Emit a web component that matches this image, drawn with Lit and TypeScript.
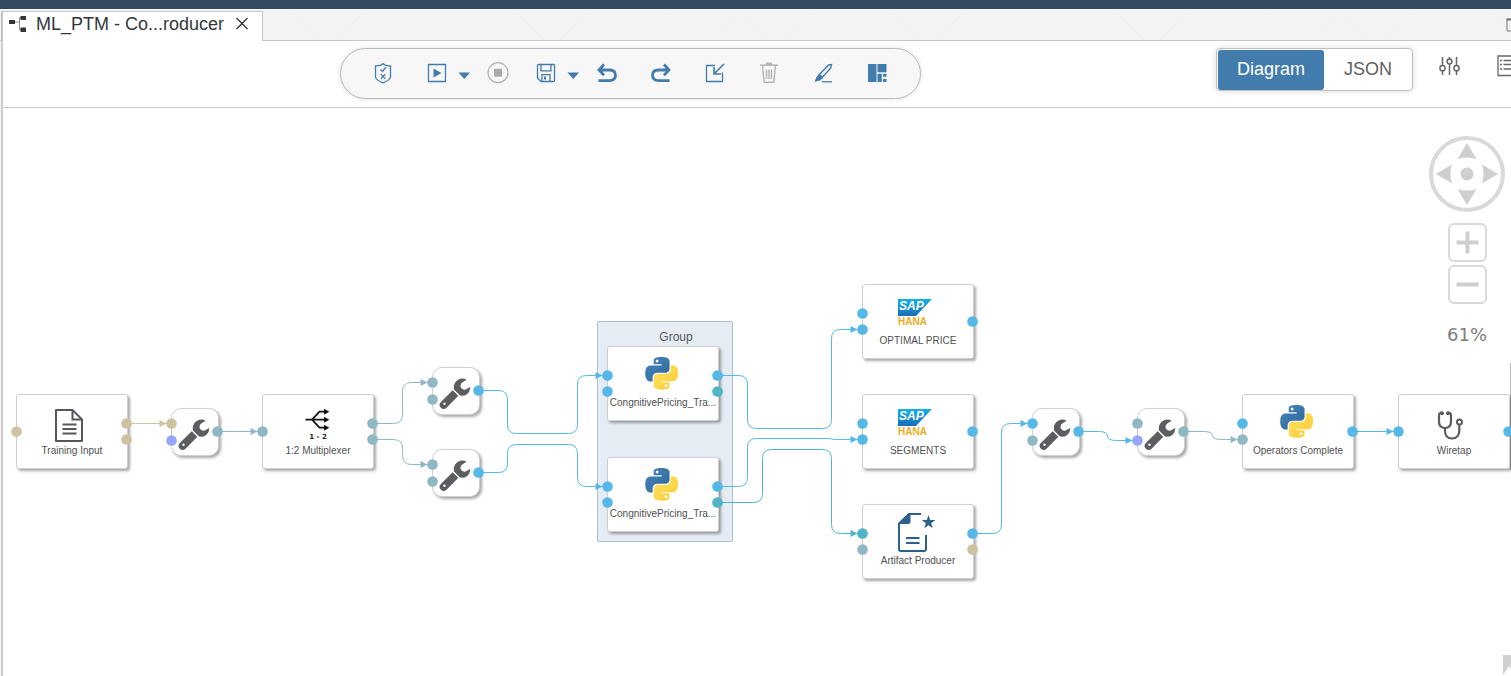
import { LitElement, html, svg, css } from "lit";
import { customElement, property, state } from "lit/decorators.js";
import { classMap } from "lit/directives/class-map.js";
import { styleMap } from "lit/directives/style-map.js";

type Point = [number, number];
type Port = [number, number, string];

interface GraphNode {
  x: number;
  y: number;
  icon: string;
  label?: string;
  ports: Port[];
}

interface Edge {
  color: string;
  points: Point[];
}

const TAN = "#cdc3a1";
const TEAL = "#8fb7c4";
const BLUE = "#56b8e6";
const CYAN = "#4fb4c6";
const VIOLET = "#94a5fb";

/* Port offsets shared by cards (112px wide) and tools (48px wide). */
const card = {
  inTop: (c: string): Port => [0, 29, c],
  inMid: (c: string): Port => [0, 37, c],
  inLow: (c: string): Port => [0, 45, c],
  outTop: (c: string): Port => [110, 29, c],
  outMid: (c: string): Port => [110, 37, c],
  outLow: (c: string): Port => [110, 45, c],
};
const tool = {
  inTop: (c: string): Port => [0, 15, c],
  inLow: (c: string): Port => [0, 32, c],
  out: (c: string): Port => [46, 23, c],
};

const NODES: GraphNode[] = [
  { x: 16, y: 286, icon: "document", label: "Training Input", ports: [card.inMid(TAN), card.outTop(TAN), card.outLow(TAN)] },
  { x: 171, y: 300, icon: "wrench", ports: [tool.inTop(TAN), tool.inLow(VIOLET), tool.out(TEAL)] },
  { x: 262, y: 286, icon: "multiplexer", label: "1:2 Multiplexer", ports: [card.inMid(TEAL), card.outTop(TEAL), card.outLow(TEAL)] },
  { x: 432, y: 259, icon: "wrench", ports: [tool.inTop(TEAL), tool.inLow(TEAL), tool.out(BLUE)] },
  { x: 432, y: 341, icon: "wrench", ports: [tool.inTop(TEAL), tool.inLow(TEAL), tool.out(BLUE)] },
  { x: 607, y: 238, icon: "python", label: "CongnitivePricing_Tra...", ports: [card.inTop(BLUE), card.inLow(BLUE), card.outTop(BLUE), card.outLow(CYAN)] },
  { x: 607, y: 349, icon: "python", label: "CongnitivePricing_Tra...", ports: [card.inTop(BLUE), card.inLow(BLUE), card.outTop(BLUE), card.outLow(CYAN)] },
  { x: 862, y: 176, icon: "hana", label: "OPTIMAL PRICE", ports: [card.inTop(BLUE), card.inLow(BLUE), card.outMid(BLUE)] },
  { x: 862, y: 286, icon: "hana", label: "SEGMENTS", ports: [card.inTop(BLUE), card.inLow(BLUE), card.outMid(BLUE)] },
  { x: 862, y: 396, icon: "artifact", label: "Artifact Producer", ports: [card.inTop(CYAN), card.inLow(TEAL), card.outTop(BLUE), card.outLow(TAN)] },
  { x: 1032, y: 300, icon: "wrench", ports: [tool.inTop(BLUE), tool.inLow(TEAL), tool.out(BLUE)] },
  { x: 1137, y: 300, icon: "wrench", ports: [tool.inTop(TEAL), tool.inLow(VIOLET), tool.out(TEAL)] },
  { x: 1242, y: 286, icon: "python", label: "Operators Complete", ports: [card.inTop(BLUE), card.inLow(TEAL), card.outMid(BLUE)] },
  { x: 1398, y: 286, icon: "stethoscope", label: "Wiretap", ports: [card.inMid(BLUE), card.outMid(BLUE)] },
];

const EDGES: Edge[] = [
  { color: TAN, points: [[126, 315], [171, 315]] },
  { color: TEAL, points: [[217, 323], [262, 323]] },
  { color: TEAL, points: [[372, 315], [402, 315], [402, 274], [432, 274]] },
  { color: TEAL, points: [[372, 331], [402, 331], [402, 356], [432, 356]] },
  { color: BLUE, points: [[478, 282], [507, 282], [507, 325], [577, 325], [577, 267], [607, 267]] },
  { color: BLUE, points: [[478, 364], [507, 364], [507, 336], [577, 336], [577, 378], [607, 378]] },
  { color: BLUE, points: [[717, 267], [747, 267], [747, 320], [831, 320], [831, 221], [862, 221]] },
  { color: BLUE, points: [[717, 378], [747, 378], [747, 330], [831, 330], [831, 331], [862, 331]] },
  { color: CYAN, points: [[717, 394], [762, 394], [762, 341], [831, 341], [831, 425], [862, 425]] },
  { color: BLUE, points: [[972, 425], [1001, 425], [1001, 315], [1032, 315]] },
  { color: BLUE, points: [[1078, 323], [1107, 323], [1107, 332], [1137, 332]] },
  { color: TEAL, points: [[1183, 323], [1212, 323], [1212, 331], [1242, 331]] },
  { color: BLUE, points: [[1352, 323], [1398, 323]] },
];

/* Orthogonal route through the points with rounded corners. */
function route(points: Point[], radius = 9): string {
  let d = `M${points[0][0]} ${points[0][1]}`;
  for (let i = 1; i < points.length - 1; i++) {
    const [px, py] = points[i - 1];
    const [cx, cy] = points[i];
    const [nx, ny] = points[i + 1];
    const before = Math.abs(cx - px) + Math.abs(cy - py);
    const after = Math.abs(nx - cx) + Math.abs(ny - cy);
    const inR = Math.min(radius, before / 2);
    const outR = Math.min(radius, after / 2);
    const ax = cx - Math.sign(cx - px) * inR;
    const ay = cy - Math.sign(cy - py) * inR;
    const bx = cx + Math.sign(nx - cx) * outR;
    const by = cy + Math.sign(ny - cy) * outR;
    d += `L${ax} ${ay}Q${cx} ${cy} ${bx} ${by}`;
  }
  const end = points[points.length - 1];
  return `${d}L${end[0]} ${end[1]}`;
}

const PYTHON_BLUE =
  "M14.25.18l.9.2.73.26.59.3.45.32.34.34.25.34.16.33.1.3.04.26.02.2-.01.13V8.5l-.05.63-.13.55-.21.46-.26.38-.3.31-.33.25-.35.19-.35.14-.33.1-.3.07-.26.04-.21.02H8.77l-.69.05-.59.14-.5.22-.41.27-.33.32-.27.35-.2.36-.15.37-.1.35-.07.32-.04.27-.02.21v3.06H3.17l-.21-.03-.28-.07-.32-.12-.35-.18-.36-.26-.36-.36-.35-.46-.32-.59-.28-.73-.21-.88-.14-1.05-.05-1.23.06-1.22.16-1.04.24-.87.32-.71.36-.57.4-.44.42-.33.42-.24.4-.16.36-.1.32-.05.24-.01h.16l.06.01h8.16v-.83H6.18l-.01-2.75-.02-.37.05-.34.11-.31.17-.28.25-.26.31-.23.38-.2.44-.18.51-.15.58-.12.64-.1.71-.06.77-.04.84-.02 1.27.05zm-6.3 1.98l-.23.33-.08.41.08.41.23.34.33.22.41.09.41-.09.33-.22.23-.34.08-.41-.08-.41-.23-.33-.33-.22-.41-.09-.41.09z";
const PYTHON_YELLOW =
  "M21.04 6.11l.28.06.32.12.35.18.36.27.36.35.35.47.32.59.28.73.21.88.14 1.04.05 1.23-.06 1.23-.16 1.04-.24.86-.32.71-.36.57-.4.45-.42.33-.42.24-.4.16-.36.09-.32.05-.24.02-.16-.01h-8.22v.82h5.84l.01 2.76.02.36-.05.34-.11.31-.17.29-.25.25-.31.24-.38.2-.44.17-.51.15-.58.13-.64.09-.71.07-.77.04-.84.01-1.27-.04-1.07-.14-.9-.2-.73-.25-.59-.3-.45-.33-.34-.34-.25-.34-.16-.33-.1-.3-.04-.25-.02-.2.01-.13v-5.34l.05-.64.13-.54.21-.46.26-.38.3-.32.33-.24.35-.2.35-.14.33-.1.3-.06.26-.04.21-.02.13-.01h5.84l.69-.05.59-.14.5-.21.41-.28.33-.32.27-.35.2-.36.15-.36.1-.35.07-.32.04-.28.02-.21V6.07h2.09l.14.01zm-6.47 14.25l-.23.33-.08.41.08.41.23.33.33.23.41.08.41-.08.33-.23.23-.33.08-.41-.08-.41-.23-.33-.33-.23-.41-.08-.41.08z";

const NODE_ICONS: Record<string, unknown> = {
  document: svg`
    <g fill="none" stroke="#55585a" stroke-width="2">
      <path d="M4 8h16.500l9.500 9.500V39H4z" stroke-linejoin="round"/>
      <path d="M20.500 8v9.500H30M10.500 22.500h14M10.500 27h14M10.500 31.500h14"/>
    </g>`,
  multiplexer: svg`
    <g fill="none" stroke="#111" stroke-width="1.800">
      <path d="M7.500 17.700h20M14 17.700L21.500 9.700H27.500M14 17.700l7.500 8H27.500"/>
    </g>
    <path d="M26 6.700l5.300 3-5.300 3zM26 14.700l5.300 3-5.300 3zM26 22.700l5.300 3-5.300 3z" fill="#111"/>
    <text class="mux" x="20" y="37" text-anchor="middle">1 - 2</text>`,
  python: svg`
    <g transform="translate(2.300 3) scale(1.360)" fill-rule="evenodd">
      <path d=${PYTHON_BLUE} fill="url(#pyBlue)"/>
      <path d=${PYTHON_YELLOW} fill="url(#pyYellow)"/>
    </g>
    <defs>
      <linearGradient id="pyBlue" x1="0" y1="0" x2="1" y2="1"><stop offset="0" stop-color="#4587bd"/><stop offset="1" stop-color="#2f6595"/></linearGradient>
      <linearGradient id="pyYellow" x1="0" y1="0" x2="1" y2="1"><stop offset="0" stop-color="#ffe467"/><stop offset="1" stop-color="#fbca32"/></linearGradient>
    </defs>`,
  hana: svg`
    <defs><linearGradient id="sapBlue" x1="0" y1="0" x2="0" y2="1"><stop offset="0" stop-color="#12b2ea"/><stop offset="1" stop-color="#1c6cb8"/></linearGradient></defs>
    <path d="M0 7h34L18 24H0z" fill="url(#sapBlue)"/>
    <text class="sap" x="1" y="18">SAP</text>
    <text class="hana" x="0" y="33">HANA</text>`,
  artifact: svg`
    <g fill="none" stroke="#2e608c" stroke-width="2">
      <path d="M23 2H11L1 11.500V37q0 2 2 2h23q2 0 2-2V23" stroke-linejoin="round"/>
      <path d="M8 26h13.500M8 31h13.500"/>
    </g>
    <path d="M0 12L11 1.500h1.500V10q0 2-2 2z" fill="#2e608c"/>
    <path d="M30.500 3l1.700 4.900 5.100.1-4.100 3.200 1.500 5-4.200-3-4.200 3 1.500-5L23.700 8l5.100-.1z" fill="#2e608c"/>`,
  stethoscope: svg`
    <g fill="none" stroke="#5a5c5e" stroke-width="2.200" stroke-linecap="round">
      <path d="M8 11Q5 10.500 5 13.500v6q0 6.500 6 6.500t6-6.500v-6q0-3-3-2.500"/>
      <path d="M11 26v2.500q0 8 7 8t7.300-8V23"/>
      <circle cx="25.500" cy="20" r="2.500" stroke-width="2"/>
    </g>
    <circle cx="8" cy="11.300" r="2" fill="#5a5c5e"/><circle cx="14" cy="11.300" r="2" fill="#5a5c5e"/>`,
  wrench: svg`
    <path d="M11.700 37.800L23.500 26" stroke="#5b5d60" stroke-width="8" stroke-linecap="round"/>
    <circle cx="12.500" cy="36.700" r="1.200" fill="#fff"/>
    <path d="M34.600 12.700A8.600 8.600 0 0 0 21.800 20q0 2.500.8 4.200l4 3.900q4.700 1.700 8.300-.9 3.400-2.700 3.300-7.200l-4.600 2.600q-4.100.4-5.200-3.100.1-3.100 2.200-4.200z" fill="#5b5d60"/>
    <path d="M20.500 22L28.500 30" stroke="#fff" stroke-width="1.400"/>`,
};

const TOOL_ICONS: Record<string, unknown> = {
  validate: svg`<g fill="none" stroke="currentColor" stroke-width="1.300">
      <path d="M11 1.700Q8 4.300 3.500 3.800V15q.5 3 7.500 5.800 7-2.800 7.500-5.800V3.800Q14 4.300 11 1.700z"/>
      <path d="M8.500 7.500l2 2L14 5.200M8.700 12.300l4.600 4.600M13.300 12.300l-4.600 4.600"/></g>`,
  run: svg`<path d="M2.500 2.500h17v17h-17z" fill="none" stroke="currentColor" stroke-width="1.300"/><path d="M7.500 6.500l8 4.500-8 4.500z" fill="currentColor"/>`,
  stop: svg`<circle cx="11" cy="10.700" r="10" fill="none" stroke="currentColor" stroke-width="1.300"/><path d="M7 6.700h8v8H7z" fill="#aaa"/>`,
  save: svg`<g fill="none" stroke="currentColor" stroke-width="1.300">
      <path d="M3.500 2.500h15q1 0 1 1v15q0 1-1 1H6l-3.500-3.500V3.500q0-1 1-1z"/>
      <path d="M6 2.500v6.300h10V2.500M7 19.500v-6.800h8v6.800"/></g><path d="M9 14.500h2v3H9z" fill="currentColor"/>`,
  undo: svg`<path d="M8 2.500L3 8l5 5.300M3.500 8H13.500q6 .3 6 5.300t-6 5.400H2.500" fill="none" stroke="currentColor" stroke-width="2.800"/>`,
  redo: svg`<path d="M14 2.500L19 8l-5 5.300M18.500 8H8.500q-6 .3-6 5.300t6 5.400H19.500" fill="none" stroke="currentColor" stroke-width="2.800"/>`,
  import: svg`<g fill="none" stroke="currentColor"><path d="M11 3.500H2.500v16h16V10.500" stroke-width="1.300"/><path d="M20 2L10.500 11.500M10 5v7h7" stroke-width="1.600"/></g>`,
  trash: svg`<g fill="none" stroke="currentColor" stroke-width="1.400"><path d="M4.500 4l1.700 16.300h9.600L17.500 4M8.500 7.500v9.500M11 7.500v9.500M13.500 7.500v9.500"/><path d="M2 3.200h18" stroke-width="1.600"/></g><path d="M8 .5h6v2.500H8z" fill="currentColor"/>`,
  clean: svg`<path d="M7.500 12.500L16.500 3l3-.5-.8 3.500-8.500 9.500z" fill="none" stroke="currentColor" stroke-width="1.400"/><path d="M7 12l4 4-3 2.500-5.500 1.300L4.500 15z" fill="currentColor"/><path d="M10 19.800h10" stroke="currentColor" stroke-width="1.300"/>`,
  arrange: svg`<path d="M2 2h8.500v18H2zM11.500 2h9v8.300h-9zM11.500 11.700h4.300V20h-4.300zM17 11.700h3.500v3H17zM17 17h3.500v3H17z" fill="currentColor"/>`,
};

@customElement("graph-node")
export class GraphNodeElement extends LitElement {
  @property() icon = "";
  @property() label = "";

  static styles = css`
    :host { display: block; }
    .card, .tool {
      box-sizing: border-box;
      background: #fff;
      border: 1px solid #cfcfcf;
      box-shadow: 2px 2px 3px rgba(0, 0, 0, 0.35);
    }
    .card {
      width: 112px;
      height: 75px;
      border-radius: 3px;
      display: flex;
      flex-direction: column;
      align-items: center;
      padding-top: 7px;
    }
    .tool { width: 48px; height: 48px; border-radius: 10px; }
    .tool svg { margin: -1px; }
    svg { display: block; flex: none; overflow: visible; }
    .label {
      font: 10px/18px "Liberation Sans", Arial, sans-serif;
      color: #505050;
      white-space: nowrap;
    }
    .mux { font: bold 7px "DejaVu Sans", sans-serif; fill: #222; }
    .sap { font: italic bold 12px "Liberation Sans", sans-serif; fill: #fff; }
    .hana { font: bold 10px "Liberation Sans", sans-serif; fill: #f0ab1c; }
  `;

  render() {
    if (!this.label) {
      return html`<div class="tool"><svg width="48" height="48" viewBox="0 0 48 48">${NODE_ICONS[this.icon]}</svg></div>`;
    }
    return html`<div class="card">
      <svg width="40" height="40" viewBox="0 0 40 40">${NODE_ICONS[this.icon]}</svg>
      <span class="label">${this.label}</span>
    </div>`;
  }
}

@customElement("app-root")
export class AppRoot extends LitElement {
  @state() private view: "diagram" | "json" = "diagram";

  static styles = css`
    :host {
      display: flex;
      flex-direction: column;
      min-height: 100vh;
      overflow: hidden;
      background: #fff;
      color: #333;
      font-family: "Liberation Sans", Arial, sans-serif;
    }
    svg { display: block; flex: none; }
    button {
      margin: 0;
      padding: 0;
      border: 0;
      background: none;
      color: inherit;
      font: inherit;
      cursor: pointer;
    }
    .shell { height: 9px; background: #354a5f; }
    .tabs {
      position: relative;
      display: flex;
      align-items: flex-end;
      justify-content: space-between;
      height: 31px;
      background: #f3f3f3;
      border-bottom: 1px solid #c4c4c4;
    }
    .pattern { position: absolute; inset: 0; width: 100%; height: 100%; }
    .tab {
      position: relative;
      box-sizing: border-box;
      display: flex;
      align-items: center;
      height: 30px;
      margin: 0 0 -1px 1px;
      padding: 0 14px 6px 6px;
      gap: 9px;
      background: #fff;
      border: solid #c4c4c4;
      border-width: 1px 1px 0 2px;
    }
    .tab-title { font-size: 18px; line-height: 24px; color: #32363a; white-space: nowrap; }
    .close { margin-left: 3px; }
    .maximize { position: relative; align-self: center; width: 5px; overflow: hidden; }
    .body {
      flex: 1;
      display: flex;
      flex-direction: column;
      background: linear-gradient(90deg, #f4f4f4 0 1px, #cbcbcb 1px 3px, #fff 3px);
    }
    .bar {
      box-sizing: border-box;
      display: flex;
      align-items: flex-start;
      height: 67px;
      margin-left: 3px;
      padding-top: 7px;
      border-bottom: 1px solid #c9c9c9;
    }
    .space-left { flex: 337; }
    .space-mid { flex: 295; }
    .pill {
      box-sizing: border-box;
      flex: none;
      display: flex;
      align-items: center;
      gap: 32px;
      height: 51px;
      padding: 0 32px 1px 31px;
      border: 1px solid #b9b9b9;
      border-radius: 26px;
      background: #f7f7f7;
      box-shadow: 0 0 5px rgba(0, 0, 0, 0.12);
      color: #427cac;
    }
    .split { display: flex; gap: 9px; margin-right: -16px; }
    .muted { color: #b5b5b5; }
    .stop { margin-right: -6px; }
    .actions { flex: none; display: flex; width: 295px; color: #666; }
    .actions > * { flex: none; }
    .switch {
      box-sizing: border-box;
      display: flex;
      width: 197px;
      height: 43px;
      padding: 1px 0 0 1px;
      border: 1px solid #bfbfbf;
      border-radius: 4px;
      background: #fff;
      box-shadow: 0 0 6px rgba(0, 0, 0, 0.14);
      font-size: 18px;
      line-height: 38px;
    }
    .switch button { flex: 88; height: 40px; padding-bottom: 2px; border-radius: 3px; color: #5f5f5f; }
    .switch .selected { flex: 106; background: #427cac; color: #fff; }
    .settings { margin: 7px 37px 0 26px; align-self: flex-start; }
    .outline { margin-top: 7px; align-self: flex-start; }
    .canvas { position: relative; flex: 1; min-height: 568px; overflow: hidden; }
    .layer { position: absolute; inset: 0; width: 100%; height: 100%; pointer-events: none; }
    .group {
      position: absolute;
      left: 597px;
      top: 213px;
      box-sizing: border-box;
      width: 136px;
      height: 221px;
      padding: 7px 0 0 22px;
      border: 1px solid #a8bfd8;
      border-radius: 2px;
      background: #e6ecf4;
      text-align: center;
      font-size: 12px;
      line-height: 16px;
      color: #5a5a5a;
    }
    .node { position: absolute; }
    .nav {
      position: absolute;
      top: 28px;
      right: 6px;
      display: flex;
      flex-direction: column;
      align-items: center;
      color: #d9d9d9;
    }
    .zoom {
      box-sizing: border-box;
      width: 39px;
      height: 39px;
      margin-top: 3px;
      border: 2px solid #d9d9d9;
      border-radius: 6px;
      background: #fff;
    }
    .pad { margin-bottom: 8px; }
    .level {
      margin-top: 20px;
      font: 18px/22px "DejaVu Sans", Verdana, sans-serif;
      color: #7c7c7c;
    }
    .edge-handle { position: absolute; right: 0; top: 255px; width: 1px; height: 107px; background: #bdbdbd; }
    .corner { position: absolute; right: 0; bottom: 0; }
  `;

  private tool(name: string, label: string, cls = "") {
    return html`<button class=${cls} aria-label=${label} title=${label}>
      <svg width="22" height="22" viewBox="0 0 22 22">${TOOL_ICONS[name]}</svg>
    </button>`;
  }

  private caret(label: string) {
    return html`<button aria-label=${label}>
      <svg width="14" height="22" viewBox="0 0 14 22"><path d="M1.500 10.500h11.500l-5.700 6.500z" fill="currentColor"/></svg>
    </button>`;
  }

  private renderTabs() {
    return html`<div class="tabs">
      <svg class="pattern" aria-hidden="true">
        <defs><pattern id="peaks" width="75" height="32" x="34" patternUnits="userSpaceOnUse">
          <path d="M0 32L31 2 61 32" fill="none" stroke="#eeeeee"/>
        </pattern></defs>
        <rect width="100%" height="100%" fill="url(#peaks)"/>
      </svg>
      <div class="tab">
        <svg width="18" height="18" viewBox="0 0 18 18">
          <path d="M6 7h4M14 2.500h-3.500v12H14" fill="none" stroke="#8a8f94"/>
          <path d="M0 5h6v4H0zM11.500 1H17v4h-5.500zM11.500 12.500H17V17h-5.500z" fill="#32363a"/>
        </svg>
        <span class="tab-title">ML_PTM - Co...roducer</span>
        <button class="close" aria-label="Close tab">
          <svg width="12" height="14" viewBox="0 0 12 14"><path d="M.5 1l11 11M11.500 1L.5 12" stroke="#333" stroke-width="1.300"/></svg>
        </button>
      </div>
      <button class="maximize" aria-label="Maximize">
        <svg width="14" height="14" viewBox="0 0 14 14"><path d="M1 1h12v12H1z" fill="none" stroke="#777"/><path d="M.5 1.500h13" stroke="#777" stroke-width="2"/></svg>
      </button>
    </div>`;
  }

  private renderBar() {
    const isDiagram = this.view === "diagram";
    return html`<div class="bar">
      <div class="space-left"></div>
      <div class="pill" role="toolbar">
        ${this.tool("validate", "Validate")}
        <div class="split">${this.tool("run", "Run")}${this.caret("Run options")}</div>
        ${this.tool("stop", "Stop", "muted stop")}
        <div class="split">${this.tool("save", "Save")}${this.caret("Save options")}</div>
        ${this.tool("undo", "Undo")}
        ${this.tool("redo", "Redo")}
        ${this.tool("import", "Import")}
        ${this.tool("trash", "Delete", "muted")}
        ${this.tool("clean", "Clean up")}
        ${this.tool("arrange", "Auto layout")}
      </div>
      <div class="space-mid"></div>
      <div class="actions">
        <div class="switch">
          <button class=${classMap({ selected: isDiagram })} @click=${() => (this.view = "diagram")}>Diagram</button>
          <button class=${classMap({ selected: !isDiagram })} @click=${() => (this.view = "json")}>JSON</button>
        </div>
        <button class="settings" aria-label="Settings">
          <svg width="21" height="22" viewBox="0 0 21 22"><g fill="none" stroke="currentColor" stroke-width="1.500">
            <path d="M3.500 2v8.500M3.500 16v4M10.500 2v2.500M10.500 9v11M17.500 2v8.500M17.500 16v4"/>
            <circle cx="3.500" cy="13.200" r="2.600"/><circle cx="10.500" cy="6.500" r="2.400"/><circle cx="17.500" cy="13.200" r="2.600"/>
          </g></svg>
        </button>
        <button class="outline" aria-label="Outline">
          <svg width="22" height="22" viewBox="0 0 22 22"><g fill="none" stroke="currentColor" stroke-width="1.300">
            <path d="M1 1h20v19.500H1zM6.500 5.500H19M6.500 9.500H19M6.500 14H19"/><path d="M3 5.500h2M3 9.500h2M3 14h2"/>
          </g></svg>
        </button>
      </div>
    </div>`;
  }

  private renderNav() {
    return html`<div class="nav">
      <svg class="pad" width="76" height="76" viewBox="0 0 76 76" fill="currentColor">
        <circle cx="38" cy="38" r="36" fill="none" stroke="currentColor" stroke-width="4"/>
        <g fill="#cfcfcf">
          <circle cx="38" cy="38" r="6.500"/>
          <path d="M38 7l9.500 16Q38 20 28.500 23zM38 69l9.500-16Q38 56 28.500 53zM7 38l16-9.500Q20 38 23 47.500zM69 38L53 28.500Q56 38 53 47.500z"/>
        </g>
      </svg>
      <button class="zoom" aria-label="Zoom in">
        <svg width="35" height="35" viewBox="0 0 35 35"><path d="M6.500 17.500h22M17.500 6.500v22" stroke="#cfcfcf" stroke-width="4"/></svg>
      </button>
      <button class="zoom" aria-label="Zoom out">
        <svg width="35" height="35" viewBox="0 0 35 35"><path d="M6.500 17.500h22" stroke="#cfcfcf" stroke-width="4"/></svg>
      </button>
      <span class="level">61%</span>
    </div>`;
  }

  private renderCanvas() {
    return html`<div class="canvas">
      <div class="group">Group</div>
      <div class="edge-handle"></div>
      <svg class="layer">
        <g transform="translate(.5 .5)">
          ${EDGES.map(({ color, points }) => {
            const [ex, ey] = points[points.length - 1];
            return svg`
              <path d=${route(points)} fill="none" stroke=${color}/>
              <path d=${`M${ex - 12} ${ey - 3.5}L${ex - 5} ${ey}L${ex - 12} ${ey + 3.5}z`} fill=${color}/>`;
          })}
        </g>
      </svg>
      ${NODES.map(
        (n) => html`<graph-node class="node" .icon=${n.icon} .label=${n.label ?? ""}
          style=${styleMap({ left: `${n.x}px`, top: `${n.y}px` })}></graph-node>`,
      )}
      <svg class="layer">
        <g transform="translate(.5 .5)">
          ${NODES.flatMap((n) => n.ports.map(([px, py, color]) => svg`<circle cx=${n.x + px} cy=${n.y + py} r="5.300" fill=${color}/>`))}
        </g>
      </svg>
      ${this.renderNav()}
      <svg class="corner" width="8" height="21" viewBox="0 0 8 21"><path d="M0 0h8v13.500L6 11 0 20z" fill="#d0d0d0"/></svg>
    </div>`;
  }

  render() {
    return html`
      <div class="shell"></div>
      ${this.renderTabs()}
      <div class="body">${this.renderBar()}${this.renderCanvas()}</div>
    `;
  }
}
